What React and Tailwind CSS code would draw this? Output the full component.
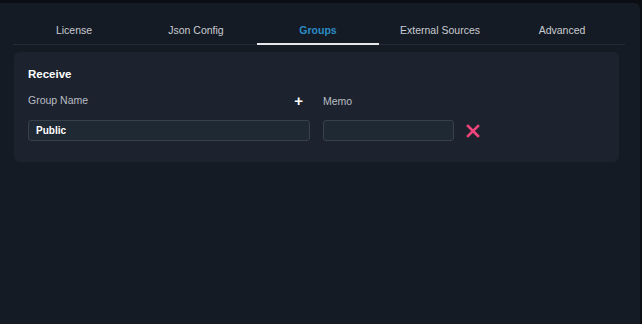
export default function App() {
  const tabs = ["License", "Json Config", "Groups", "External Sources", "Advanced"];
  const active = "Groups";

  return (
    <div
      className="w-[642px] h-[324px] bg-[#0b0f14] pt-[3px] overflow-hidden"
      style={{ fontFamily: "'Liberation Sans', Arial, sans-serif" }}
    >
      <div className="w-[640px] h-[321px] bg-[#151b25] rounded-tr-md px-[13px]">
        {/* Tabs */}
        <div className="flex w-[612px] h-[42px] border-b border-[#232a35]">
          {tabs.map((t) => (
            <div
              key={t}
              className={
                t === active
                  ? "w-[122px] flex items-end justify-center pb-[7px] text-[10.5px] leading-[12px] font-bold text-[#2b8bc6] border-b-2 border-[#e6e8ea] -mb-px"
                  : "w-[122px] flex items-end justify-center pb-[8px] text-[10.5px] leading-[12px] text-[#c9ccd1]"
              }
            >
              {t}
            </div>
          ))}
        </div>

        {/* Receive card */}
        <div className="mt-[7px] ml-px w-[605px] h-[110px] bg-[#1d232e] rounded-md px-[14px] pt-[15px]">
          <div className="text-[11.5px] font-bold text-white leading-[14px]">Receive</div>
          <div className="flex mt-[12px]">
            <div className="w-[282px] flex flex-col">
              <div className="flex justify-between items-center h-[14px] mt-[1px] text-[10.5px] text-[#b9bdc4]">
                <span>Group Name</span>
                <span className="text-[15px] font-bold text-white mr-[7px]">+</span>
              </div>
              <div className="mt-[12px] h-[21px] rounded-[3px] border border-[#394049] bg-[#1f2934] flex items-center pl-[7px] text-[10px] font-bold text-white">
                Public
              </div>
            </div>
            <div className="ml-[13px] w-[131px] flex flex-col">
              <div className="h-[14px] mt-[1px] text-[10.5px] text-[#b9bdc4] leading-[14px]">Memo</div>
              <div className="mt-[12px] h-[21px] rounded-[3px] border border-[#394049] bg-[#1f2934]" />
            </div>
            <div className="ml-[12px] mt-[31px]">
              <svg width="14" height="14" viewBox="0 0 14 14">
                <path d="M2 2 L12 12 M12 2 L2 12" stroke="#f0457a" strokeWidth="2.6" strokeLinecap="square" />
              </svg>
            </div>
          </div>
        </div>
      </div>
    </div>
  );
}
